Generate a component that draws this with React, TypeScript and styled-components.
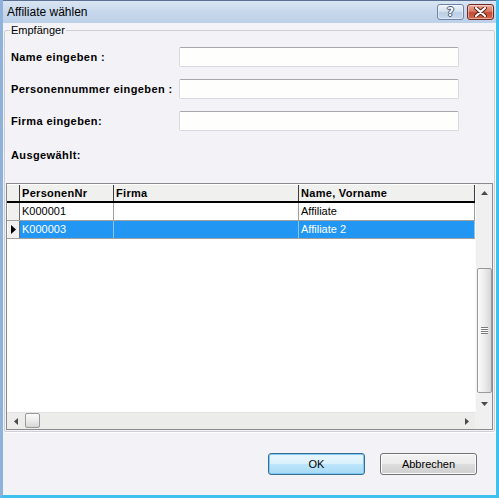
import React from 'react';
import styled, { createGlobalStyle } from 'styled-components';

const Global = createGlobalStyle`
  html, body { margin: 0; padding: 0; background: #ffffff; }
  body { font-family: "Liberation Sans", Arial, sans-serif; }
  * { box-sizing: border-box; }
`;

const Window = styled.div`
  width: 499px;
  height: 498px;
  display: flex;
  flex-direction: column;
  border-left: 3px solid #8fb1da;
  border-right: 3px solid #3fc1ee;
  border-bottom: 3px solid #3fc1ee;
  background: #f3f2f7;
  color: #000;
`;

const TitleBar = styled.div`
  height: 23px;
  flex: none;
  display: flex;
  align-items: center;
  gap: 3px;
  padding: 0 2px 1px 4px;
  border-top: 1px solid #5b7192;
  background: linear-gradient(#d9e5f3, #c6d7ec 55%, #bcd0e8);
`;

const Title = styled.div`
  flex: 1;
  font-size: 12px;
  line-height: 14px;
  color: #000;
`;

const CapButton = styled.div<{ $variant: 'help' | 'close' }>`
  width: 27px;
  height: 16px;
  border-radius: 3px;
  display: flex;
  align-items: center;
  justify-content: center;
  border: 1px solid ${(p) => (p.$variant === 'close' ? '#6e2a22' : '#6f84a3')};
  background: ${(p) =>
    p.$variant === 'close'
      ? 'linear-gradient(#ecab9d, #d97862 45%, #c34a32 55%, #d2684f)'
      : 'linear-gradient(#eef3f9, #d6e2f0 45%, #bccfe6 55%, #c9d9ec)'};
  box-shadow: inset 0 0 0 1px rgba(255, 255, 255, 0.45);
`;

const HelpGlyph = styled.span`
  font-family: "DejaVu Sans", sans-serif;
  font-weight: bold;
  font-size: 12px;
  line-height: 12px;
  color: #ffffff;
  text-shadow: 0 0 1px #39506f, 1px 0 0 #4a6183, -1px 0 0 #4a6183, 0 1px 0 #4a6183, 0 -1px 0 #4a6183;
`;

const Client = styled.div`
  flex: 1;
  display: flex;
  flex-direction: column;
  padding: 0 1px 0 1px;
`;

const GroupBox = styled.fieldset`
  margin: 0;
  padding: 0 1px 1px 1px;
  border: 1px solid #cfcdd6;
  border-radius: 2px;
  box-shadow: 1px 1px 0 #ffffff;
  min-width: 0;
`;

const Legend = styled.legend`
  margin-left: 4px;
  padding: 0 1px;
  font-size: 11px;
  line-height: 14px;
  color: #000;
`;

const FormGrid = styled.div`
  display: grid;
  grid-template-columns: 168px 280px;
  row-gap: 12px;
  align-items: center;
  margin: 10px 0 0 5px;
`;

const Label = styled.label`
  font-size: 11px;
  font-weight: bold;
  line-height: 13px;
  letter-spacing: 0.4px;
  white-space: nowrap;
`;

const TextInput = styled.input`
  width: 280px;
  height: 20px;
  margin: 0;
  padding: 0 3px;
  border: 1px solid #d8d8de;
  border-top-color: #a6a6ad;
  border-radius: 2px;
  background: #fefefd;
  font-family: "Liberation Sans", Arial, sans-serif;
  font-size: 11px;
  outline: none;
`;

const SelectedLabel = styled(Label)`
  display: block;
  margin: 18px 0 0 5px;
`;

const Frame = styled.div`
  margin-top: 21px;
  height: 247px;
  border: 1px solid #8a8a8a;
  display: grid;
  grid-template-columns: 468px 17px;
  grid-template-rows: 228px 17px;
  background: #ffffff;
`;

const COLS = '13px 94px 185px 176px';

const Sheet = styled.div`
  display: flex;
  flex-direction: column;
  background: #ffffff;
  overflow: hidden;
`;

const HeaderRow = styled.div`
  display: grid;
  grid-template-columns: ${COLS};
  height: 19px;
  border-top: 1px solid #ffffff;
  border-bottom: 2px solid #000000;
  background: #f0f0ee;
`;

const HeaderCell = styled.div`
  border-right: 1px solid #3c3c3c;
  padding-left: 2px;
  font-size: 11px;
  font-weight: bold;
  line-height: 16px;
  letter-spacing: 0.3px;
  white-space: nowrap;
  overflow: hidden;
`;

const DataRow = styled.div<{ $selected?: boolean }>`
  display: grid;
  grid-template-columns: ${COLS};
  height: 18px;
  border-bottom: 1px solid #a0a0a0;
  background: ${(p) => (p.$selected ? '#2196f2' : '#ffffff')};
  color: ${(p) => (p.$selected ? '#ffffff' : '#000000')};
`;

const RowHead = styled.div`
  background: #f0f0ee;
  border-left: 1px solid #ffffff;
  border-right: 1px solid #6e6e6e;
  display: flex;
  align-items: center;
  justify-content: center;
`;

const Cell = styled.div<{ $selected?: boolean }>`
  border-right: 1px solid ${(p) => (p.$selected ? '#8fc3f1' : '#a0a0a0')};
  padding-left: 2px;
  font-size: 11px;
  line-height: 17px;
  white-space: nowrap;
  overflow: hidden;
`;

const VScroll = styled.div`
  display: flex;
  flex-direction: column;
  background: #f0f0f0;
  border-left: 1px solid #fbfbfb;
`;

const HScroll = styled.div`
  display: flex;
  align-items: stretch;
  background: #ececea;
  border-top: 1px solid #e2e2e0;
`;

const ArrowBox = styled.div`
  width: 17px;
  height: 17px;
  flex: none;
  display: flex;
  align-items: center;
  justify-content: center;
`;

const VTrack = styled.div`
  flex: 1;
  display: flex;
  flex-direction: column;
  align-items: center;
`;

const HTrack = styled.div`
  flex: 1;
  display: flex;
  align-items: flex-start;
`;

const VThumb = styled.div`
  margin-top: 67px;
  width: 15px;
  height: 125px;
  border: 1px solid #9a9a9a;
  border-radius: 2px;
  background: linear-gradient(90deg, #fbfbfb, #ececec 50%, #d6d6d6);
  display: flex;
  align-items: center;
  justify-content: center;
`;

const HThumb = styled.div`
  margin-left: 1px;
  width: 15px;
  height: 15px;
  border: 1px solid #9a9a9a;
  border-radius: 2px;
  background: linear-gradient(#fbfbfb, #ececec 50%, #d6d6d6);
`;

const Grip = styled.div`
  width: 7px;
  height: 7px;
  background: repeating-linear-gradient(#7a7a7a 0 1px, #ffffff 1px 2px);
`;

const Corner = styled.div`
  background: #f0f0f0;
`;

const Footer = styled.div`
  display: flex;
  justify-content: flex-end;
  gap: 15px;
  margin-top: 21px;
  padding-right: 18px;
`;

const Button = styled.button<{ $default?: boolean }>`
  width: 97px;
  height: 22px;
  margin: 0;
  padding: 0;
  border-radius: 3px;
  border: 1px solid ${(p) => (p.$default ? '#3c6c93' : '#707070')};
  background: ${(p) =>
    p.$default
      ? 'linear-gradient(#eaf6fd, #d9f0fc 50%, #bee6fd 50%, #a7d9f5)'
      : 'linear-gradient(#f2f2f2, #ebebeb 50%, #dddddd 50%, #cfcfcf)'};
  box-shadow: inset 0 0 0 1px ${(p) => (p.$default ? '#7ecbf1' : '#fcfcfc')};
  font-family: "Liberation Sans", Arial, sans-serif;
  font-size: 11px;
  color: #000;
`;

const rows = [
  { nr: 'K000001', firma: '', name: 'Affiliate', selected: false },
  { nr: 'K000003', firma: '', name: 'Affiliate 2', selected: true },
];

const Tri = ({ dir }: { dir: 'up' | 'down' | 'left' | 'right' }) => {
  const pts: Record<string, string> = {
    up: '0,4 3.5,0 7,4',
    down: '0,0 7,0 3.5,4',
    left: '4,0 4,7 0,3.5',
    right: '0,0 0,7 4,3.5',
  };
  const vertical = dir === 'up' || dir === 'down';
  return (
    <svg width={vertical ? 7 : 4} height={vertical ? 4 : 7} viewBox={vertical ? '0 0 7 4' : '0 0 4 7'}>
      <polygon points={pts[dir]} fill="#4a4a4a" />
    </svg>
  );
};

export default function App() {
  return (
    <>
      <Global />
      <Window>
        <TitleBar>
          <Title>Affiliate wählen</Title>
          <CapButton $variant="help">
            <HelpGlyph>?</HelpGlyph>
          </CapButton>
          <CapButton $variant="close">
            <svg width="13" height="10" viewBox="0 0 13 10">
              <path d="M2 1 L11 9 M11 1 L2 9" stroke="#5a1d15" strokeWidth="4" strokeLinecap="round" />
              <path d="M2 1 L11 9 M11 1 L2 9" stroke="#ffffff" strokeWidth="2.2" strokeLinecap="round" />
            </svg>
          </CapButton>
        </TitleBar>
        <Client>
          <GroupBox>
            <Legend>Empfänger</Legend>
            <FormGrid>
              <Label>Name eingeben :</Label>
              <TextInput />
              <Label>Personennummer eingeben :</Label>
              <TextInput />
              <Label>Firma eingeben:</Label>
              <TextInput />
            </FormGrid>
            <SelectedLabel>Ausgewählt:</SelectedLabel>
            <Frame>
              <Sheet>
                <HeaderRow>
                  <HeaderCell />
                  <HeaderCell>PersonenNr</HeaderCell>
                  <HeaderCell>Firma</HeaderCell>
                  <HeaderCell>Name, Vorname</HeaderCell>
                </HeaderRow>
                {rows.map((r) => (
                  <DataRow key={r.nr} $selected={r.selected}>
                    <RowHead>
                      {r.selected && (
                        <svg width="5" height="9" viewBox="0 0 5 9">
                          <polygon points="0,0 5,4.5 0,9" fill="#000" />
                        </svg>
                      )}
                    </RowHead>
                    <Cell $selected={r.selected}>{r.nr}</Cell>
                    <Cell $selected={r.selected}>{r.firma}</Cell>
                    <Cell $selected={r.selected}>{r.name}</Cell>
                  </DataRow>
                ))}
              </Sheet>
              <VScroll>
                <ArrowBox>
                  <Tri dir="up" />
                </ArrowBox>
                <VTrack>
                  <VThumb>
                    <Grip />
                  </VThumb>
                </VTrack>
                <ArrowBox>
                  <Tri dir="down" />
                </ArrowBox>
              </VScroll>
              <HScroll>
                <ArrowBox>
                  <Tri dir="left" />
                </ArrowBox>
                <HTrack>
                  <HThumb />
                </HTrack>
                <ArrowBox>
                  <Tri dir="right" />
                </ArrowBox>
              </HScroll>
              <Corner />
            </Frame>
          </GroupBox>
          <Footer>
            <Button $default>OK</Button>
            <Button>Abbrechen</Button>
          </Footer>
        </Client>
      </Window>
    </>
  );
}
